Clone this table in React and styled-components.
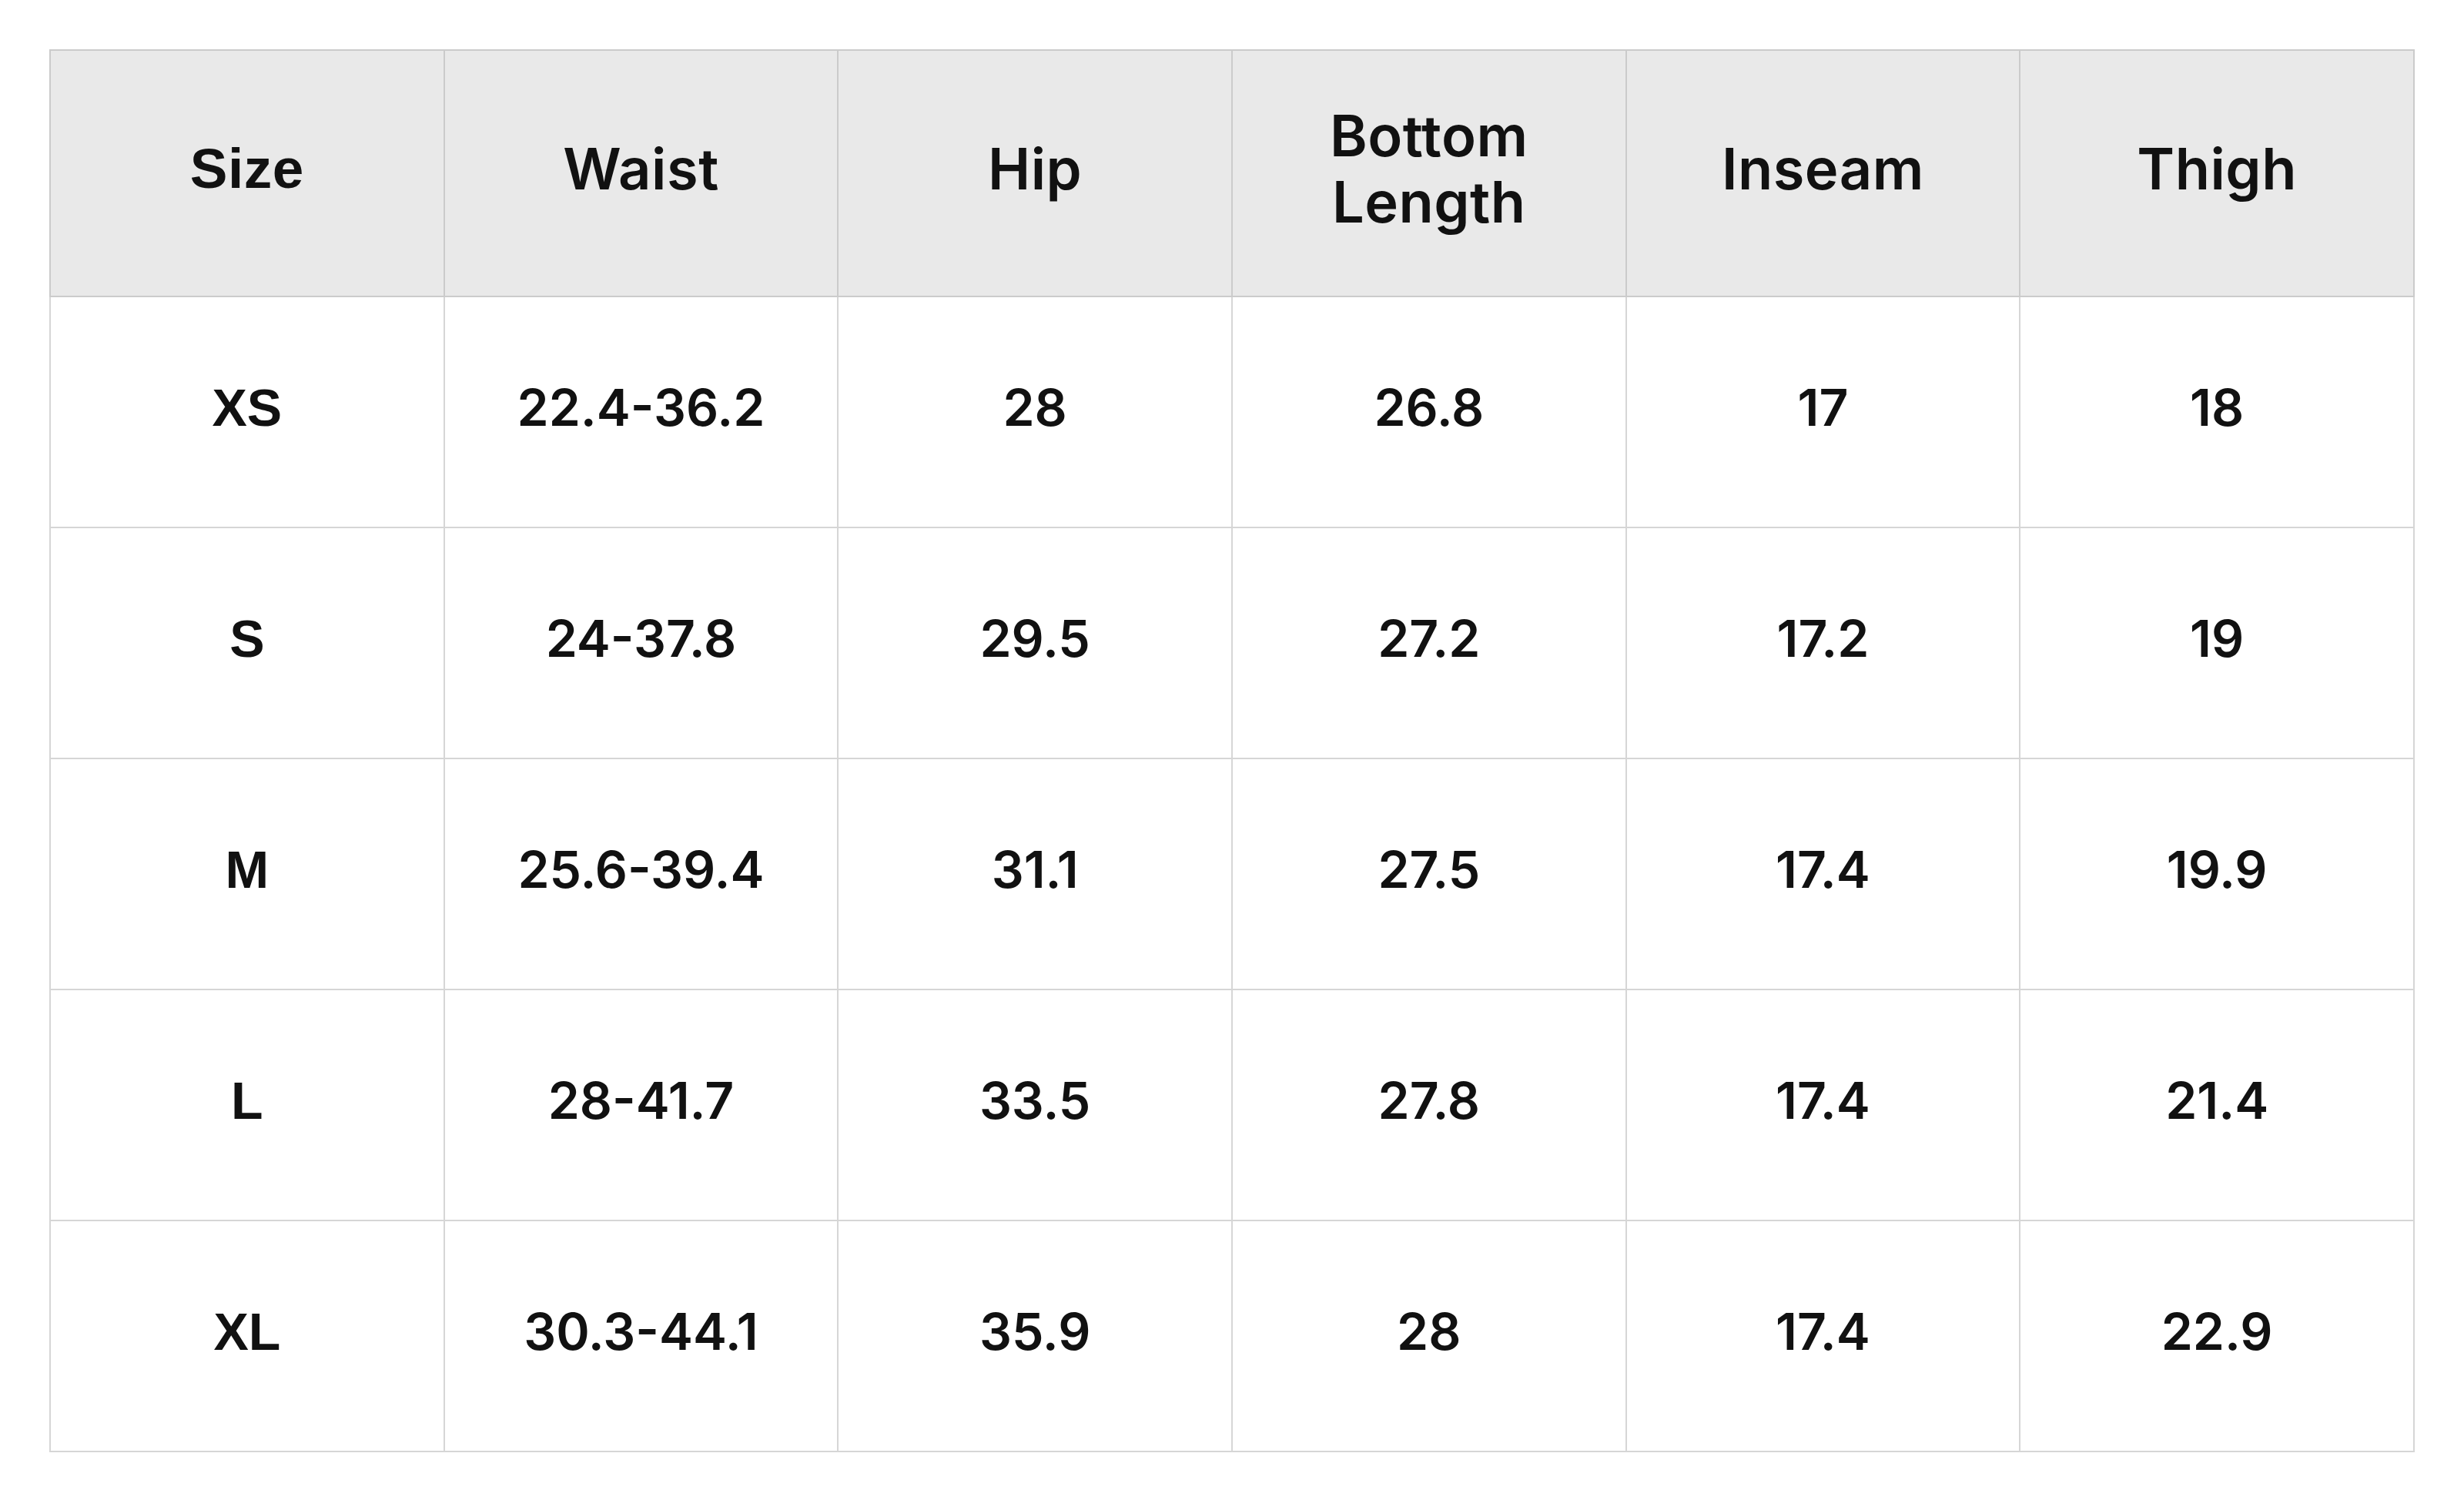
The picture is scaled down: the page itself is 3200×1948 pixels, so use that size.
import React from "react"
import styled, { createGlobalStyle } from "styled-components"

const headers = ["Size", "Waist", "Hip", "Bottom Length", "Inseam", "Thigh"]

const rows = [
  ["XS", "22.4-36.2", "28", "26.8", "17", "18"],
  ["S", "24-37.8", "29.5", "27.2", "17.2", "19"],
  ["M", "25.6-39.4", "31.1", "27.5", "17.4", "19.9"],
  ["L", "28-41.7", "33.5", "27.8", "17.4", "21.4"],
  ["XL", "30.3-44.1", "35.9", "28", "17.4", "22.9"],
]

const GlobalStyle = createGlobalStyle`
  html, body {
    margin: 0;
    padding: 0;
    background: #fff;
  }
`

const App = () => (
  <>
    <GlobalStyle />
    <Page>
      <SizeTable>
        <thead>
          <tr>
            {headers.map((h, i) => (
              <HeadCell key={h} $first={i === 0}>
                {h}
              </HeadCell>
            ))}
          </tr>
        </thead>
        <tbody>
          {rows.map(row => (
            <tr key={row[0]}>
              {row.map((value, i) => (
                <BodyCell key={i} $first={i === 0}>
                  {value}
                </BodyCell>
              ))}
            </tr>
          ))}
        </tbody>
      </SizeTable>
    </Page>
  </>
)

const Page = styled.div`
  padding: 64px;
  background: #fff;
`

const SizeTable = styled.table`
  width: 100%;
  border-collapse: collapse;
  table-layout: fixed;
  border: 2px solid #cbcbcb;
  color: #111;
`

const cellFont = ({ $first }) =>
  $first
    ? `font-family: "Liberation Sans", Arial, sans-serif; font-weight: 700;`
    : `font-family: Inter, "Noto Sans", sans-serif; font-weight: 600;`

const HeadCell = styled.th`
  height: 306px;
  padding: 0 80px 12px;
  background: #e9e9e9;
  border: 2px solid #cbcbcb;
  text-align: center;
  vertical-align: middle;
  font-size: ${({ $first }) => ($first ? "73px" : "74px")};
  line-height: 86px;
  letter-spacing: 0.5px;
  ${cellFont}
`

const BodyCell = styled.td`
  height: 286px;
  padding: 0 40px 12px;
  background: #fff;
  border: 2px solid #d6d6d6;
  text-align: center;
  vertical-align: middle;
  font-size: ${({ $first }) => ($first ? "68px" : "66px")};
  ${cellFont}
`

export default App
